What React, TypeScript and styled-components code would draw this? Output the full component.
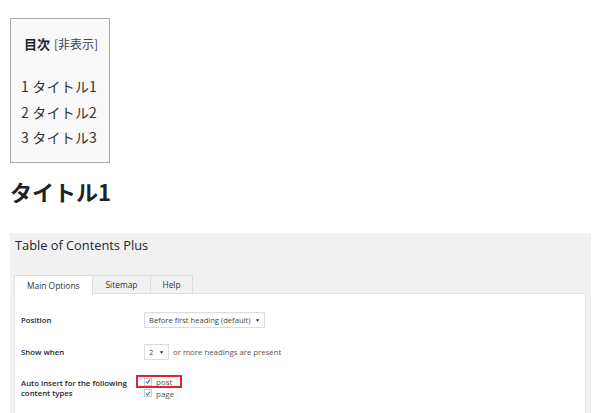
import React from "react";
import styled, { createGlobalStyle } from "styled-components";

const Global = createGlobalStyle`
  html, body { margin: 0; padding: 0; background: #fff; }
  body { font-family: "Noto Sans CJK JP", "Noto Sans", sans-serif; color: #333; overflow: hidden; }
`;

const Page = styled.div`
  width: 607px;
  height: 413px;
  padding: 18px 16px 0 10px;
  box-sizing: border-box;
  overflow: hidden;
`;

const Toc = styled.div`
  width: 100px;
  height: 145px;
  box-sizing: border-box;
  border: 1px solid #aaa;
  background: #f9f9f9;
  padding: 14px 0 0 10px;
`;

const TocTitle = styled.div`
  display: flex;
  align-items: baseline;
  gap: 4px;
  padding-left: 3px;
  font-size: 13px;
  line-height: 22px;
  height: 22px;
  margin-bottom: 19px;
`;

const TocTitleMain = styled.span`
  font-weight: 700;
  color: #222;
`;

const TocToggle = styled.span`
  font-size: 12px;
  color: #444;
`;

const TocList = styled.ol`
  list-style: none;
  margin: 0;
  padding: 0;
`;

const TocItem = styled.li`
  font-size: 14px;
  line-height: 25.5px;
  color: #333;
  letter-spacing: 0.2px;
`;

const Heading = styled.h1`
  margin: 13px 0 0 0;
  font-size: 22px;
  line-height: 30px;
  font-weight: 700;
  color: #222;
  letter-spacing: 0;
`;

const AdminPanel = styled.div`
  margin-top: 27px;
  width: 581px;
  height: 200px;
  background: #f1f1f1;
  padding: 3px 5px 0 4px;
  box-sizing: border-box;
  font-family: "Open Sans", "Noto Sans", sans-serif;
`;

const AdminTitle = styled.div`
  font-size: 12.8px;
  line-height: 18px;
  color: #23282d;
  padding-left: 1px;
  margin-bottom: 21px;
`;

const Tabs = styled.div`
  display: flex;
  height: 19px;
  position: relative;
  z-index: 1;
`;

const Tab = styled.div<{ $active?: boolean; $pad: number }>`
  box-sizing: border-box;
  height: ${p => (p.$active ? "20px" : "19px")};
  padding: 0 ${p => p.$pad}px;
  border: 1px solid #ddd;
  border-bottom: ${p => (p.$active ? "none" : "1px solid #ddd")};
  margin-right: -1px;
  background: ${p => (p.$active ? "#fff" : "#f1f1f1")};
  font-size: 8.4px;
  line-height: 18px;
  color: #333;
  display: flex;
  align-items: center;
  justify-content: center;
`;

const Content = styled.div`
  background: #fff;
  border: 1px solid #e5e5e5;
  margin-top: -1px;
  height: 160px;
  padding: 18px 0 0 6px;
  box-sizing: border-box;
`;

const Row = styled.div<{ $mb: number }>`
  display: flex;
  align-items: flex-start;
  margin-bottom: ${p => p.$mb}px;
`;

const Label = styled.div`
  width: 123px;
  flex: none;
  font-size: 7.8px;
  font-weight: 600;
  color: #23282d;
  line-height: 10px;
  padding-top: 3px;
`;

const Control = styled.div`
  display: flex;
  align-items: center;
  gap: 4px;
  font-size: 7.8px;
  color: #555;
  white-space: nowrap;
`;

const Select = styled.div<{ $w: number }>`
  box-sizing: border-box;
  width: ${p => p.$w}px;
  height: 16px;
  border: 1px solid #ddd;
  display: flex;
  align-items: center;
  justify-content: space-between;
  padding: 0 4px 0 4px;
  font-size: 7.6px;
  color: #444;
  background: #fff;
  white-space: nowrap;
  box-shadow: inset 0 1px 2px rgba(0, 0, 0, 0.04);
`;

const Caret = styled.span`
  font-size: 5px;
  color: #222;
`;

const Checks = styled.div`
  display: flex;
  flex-direction: column;
  margin-left: -8px;
`;

const CheckRow = styled.div<{ $boxed?: boolean }>`
  display: flex;
  align-items: center;
  gap: 4px;
  box-sizing: border-box;
  width: 46px;
  padding-left: ${p => (p.$boxed ? "6px" : "8px")};
  border: ${p => (p.$boxed ? "2px solid #e0242f" : "none")};
  height: ${p => (p.$boxed ? "13px" : "10px")};
  font-size: 8px;
  color: #555;
`;

const Box = styled.span`
  width: 8px;
  height: 8px;
  box-sizing: border-box;
  border: 1px solid #ccc;
  background: #fff;
  display: inline-flex;
  align-items: center;
  justify-content: center;
  flex: none;
`;

const Check = () => (
  <Box>
    <svg width="7" height="7" viewBox="0 0 10 10">
      <path d="M1.5 5.2 L4 7.6 L8.6 1.8" fill="none" stroke="#1e8cbe" strokeWidth="2" />
    </svg>
  </Box>
);

export default function App() {
  return (
    <>
      <Global />
      <Page>
        <Toc>
          <TocTitle>
            <TocTitleMain>目次</TocTitleMain>
            <TocToggle>[非表示]</TocToggle>
          </TocTitle>
          <TocList>
            <TocItem>1 タイトル1</TocItem>
            <TocItem>2 タイトル2</TocItem>
            <TocItem>3 タイトル3</TocItem>
          </TocList>
        </Toc>
        <Heading>タイトル1</Heading>
        <AdminPanel>
          <AdminTitle>Table of Contents Plus</AdminTitle>
          <Tabs>
            <Tab $active $pad={12}>Main Options</Tab>
            <Tab $pad={13}>Sitemap</Tab>
            <Tab $pad={11}>Help</Tab>
          </Tabs>
          <Content>
            <Row $mb={16}>
              <Label>Position</Label>
              <Control>
                <Select $w={121}>
                  <span>Before first heading (default)</span>
                  <Caret>▼</Caret>
                </Select>
              </Control>
            </Row>
            <Row $mb={15}>
              <Label>Show when</Label>
              <Control>
                <Select $w={25}>
                  <span>2</span>
                  <Caret>▼</Caret>
                </Select>
                <span>or more headings are present</span>
              </Control>
            </Row>
            <Row $mb={0}>
              <Label>
                Auto insert for the following
                <br />
                content types
              </Label>
              <Checks>
                <CheckRow $boxed>
                  <Check />
                  <span>post</span>
                </CheckRow>
                <CheckRow>
                  <Check />
                  <span>page</span>
                </CheckRow>
              </Checks>
            </Row>
          </Content>
        </AdminPanel>
      </Page>
    </>
  );
}
